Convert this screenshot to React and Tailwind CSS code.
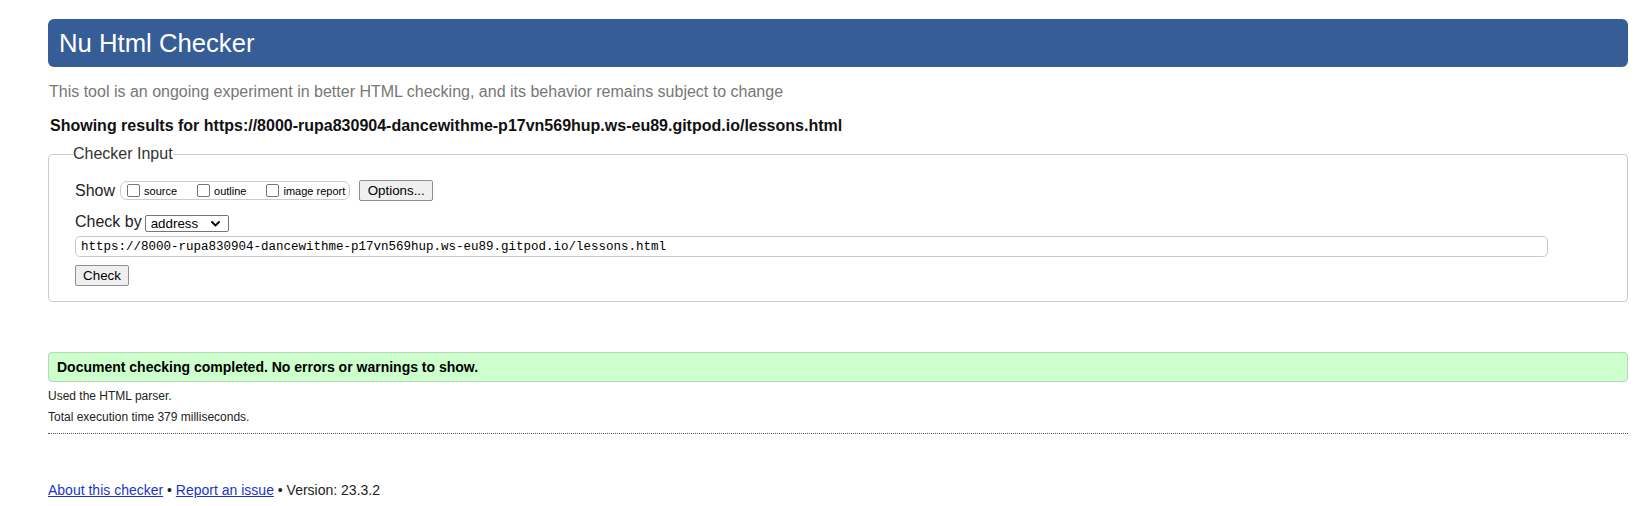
import React from "react";

const sans = { fontFamily: '"Liberation Sans", Arial, sans-serif' };

function Checkbox({ label }) {
  return (
    <label className="flex items-center">
      <span className="w-[13px] h-[13px] border border-[#767676] rounded-[2px] bg-white box-border" />
      <span className="ml-[4px] text-[11px] leading-[13px] text-black translate-y-[1px]">{label}</span>
    </label>
  );
}

export default function App() {
  return (
    <div className="w-[1648px] h-[506px] bg-white overflow-hidden" style={sans}>
      <div className="w-[1580px] ml-[48px] pt-[19px]">
        <div className="h-[48px] rounded-[6px] bg-[#365d95] flex items-center pl-[11px]">
          <h1 className="text-[25.7px] leading-[28px] text-white font-normal">Nu Html Checker</h1>
        </div>

        <p className="mt-[15px] text-[16px] leading-[20px] text-[#777777] pl-[1px]">
          This tool is an ongoing experiment in better HTML checking, and its behavior remains subject to change
        </p>

        <p className="mt-[14px] text-[16px] leading-[20px] font-bold text-[#111111] pl-[2px]">
          Showing results for https://8000-rupa830904-dancewithme-p17vn569hup.ws-eu89.gitpod.io/lessons.html
        </p>

        <fieldset className="mt-[8px] border border-[#cccccc] rounded-[4px] px-[24px] pt-[16px] pb-[15px] min-w-0">
          <legend className="text-[16px] leading-[20px] text-[#333333] p-0">Checker Input</legend>
          <div className="pl-[2px]">
            <div className="h-[21px] flex items-center">
              <span className="text-[16px] leading-[20px] text-[#222222]">Show</span>
              <div className="ml-[5px] h-[19px] flex items-center gap-[20px] pl-[6px] pr-[4px] border border-[#cccccc] rounded-[7px] box-border">
                <Checkbox label="source" />
                <Checkbox label="outline" />
                <Checkbox label="image report" />
              </div>
              <button className="ml-[9px] h-[21px] w-[74px] border border-[#8f8f8f] rounded-[2px] bg-[#efefef] text-[13.33px] leading-[19px] text-black box-border">
                Options...
              </button>
            </div>

            <div className="mt-[11px] h-[20px] flex items-start">
              <span className="text-[16px] leading-[20px] text-[#222222]">Check by</span>
              <div className="ml-[3px] mt-[3px] h-[17px] w-[84px] border border-[#767676] rounded-[2px] bg-white box-border flex items-center justify-between pl-[5px] pr-[8px]">
                <span className="text-[13.33px] leading-[15px] text-black">address</span>
                <svg width="9" height="6" viewBox="0 0 9 6" className="block">
                  <path d="M1 1 L4.5 4.5 L8 1" fill="none" stroke="#000" strokeWidth="1.8" strokeLinecap="round" strokeLinejoin="round" />
                </svg>
              </div>
            </div>

            <div className="mt-[4px] h-[21px] w-[1473px] border border-[#c8c8c8] rounded-[5px] box-border flex items-center pl-[5px]">
              <span className="text-[12.5px] leading-[14px] text-black" style={{ fontFamily: '"Liberation Mono", "Courier New", monospace' }}>
                https://8000-rupa830904-dancewithme-p17vn569hup.ws-eu89.gitpod.io/lessons.html
              </span>
            </div>

            <button className="mt-[8px] block h-[21px] w-[54px] border border-[#8f8f8f] rounded-[2px] bg-[#efefef] text-[13.33px] leading-[19px] text-black box-border">
              Check
            </button>
          </div>
        </fieldset>

        <div className="mt-[50px] h-[30px] box-border border border-[#b8d8b8] rounded-[4px] bg-[#ccffcc] pl-[8px] flex items-center">
          <span className="text-[14px] leading-[28px] font-bold text-black">
            Document checking completed. No errors or warnings to show.
          </span>
        </div>

        <p className="mt-[4px] text-[12px] leading-[21px] text-[#222222]">Used the HTML parser.</p>
        <p className="text-[12px] leading-[21px] text-[#222222]">Total execution time 379 milliseconds.</p>

        <div className="mt-[5px] border-t border-dotted border-[#555555]" />

        <p className="mt-[47px] text-[14px] leading-[18px] text-[#222222]">
          <a className="text-[#2233cc] underline">About this checker</a>
          {" • "}
          <a className="text-[#2233cc] underline">Report an issue</a>
          {" • Version: 23.3.2"}
        </p>
      </div>
    </div>
  );
}
